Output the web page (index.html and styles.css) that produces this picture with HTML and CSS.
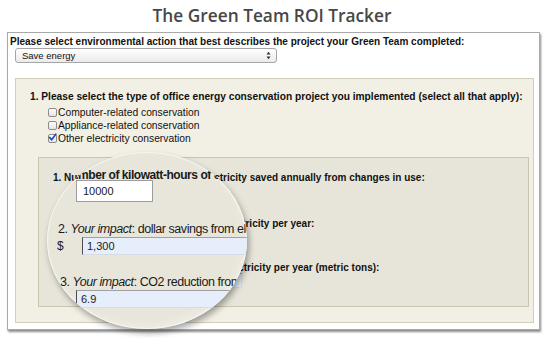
FILE: index.html
```html
<!DOCTYPE html>
<html>
<head>
<meta charset="utf-8">
<link rel="stylesheet" href="styles.css">
</head>
<body>
<h1 class="title">The Green Team ROI Tracker</h1>
<div class="frame">
  <div class="prompt">Please select environmental action that best describes the project your Green Team completed:</div>
  <div class="select"><span>Save energy</span><svg class="arrows" width="5" height="9" viewBox="0 0 5 9"><path d="M0.5 3.5 L2.5 0.8 L4.5 3.5 Z M0.5 5.5 L2.5 8.2 L4.5 5.5 Z" fill="#333"/></svg></div>
  <div class="panel">
    <div class="q">1. Please select the type of office energy conservation project you implemented (select all that apply):</div>
    <ul class="checks">
      <li><span class="cb"></span>Computer-related conservation</li>
      <li><span class="cb"></span>Appliance-related conservation</li>
      <li><span class="cb"><svg width="9" height="9" viewBox="0 0 9 9"><path d="M1.6 4.4 L3.6 6.8 L7.8 1.2" fill="none" stroke="#1f4fc4" stroke-width="1.7" stroke-linecap="round" stroke-linejoin="round"/></svg></span>Other electricity conservation</li>
    </ul>
    <div class="sub">
      <div class="q">1. Number of kilowatt-hours of electricity saved annually from changes in use:</div>
      <div class="field field-kwh">10000</div>
      <div class="q q2">2. <i>Your impact</i>: dollar savings from electricity per year:</div>
      <div class="money"><span class="cur">$</span><div class="field field-blue field-usd">1,300</div></div>
      <div class="q q3">3. <i>Your impact</i>: CO2 reduction from electricity per year (metric tons):</div>
      <div class="field field-blue field-co2">6.9</div>
    </div>
  </div>
</div>
<div class="lens">
  <div class="m-q1">1. Number of kilowatt-hours of electricity saved annually from changes in use:</div>
  <div class="m-field m-kwh">10000</div>
  <div class="m-q m-q2">2. <i>Your impact</i>: dollar savings from electricity per year:</div>
  <div class="m-money"><span class="m-cur">$</span><div class="m-field m-blue">1,300</div></div>
  <div class="m-q m-q3">3. <i>Your impact</i>: CO2 reduction from electricity per year (metric tons):</div>
  <div class="m-field m-blue m-co2">6.9</div>
</div>
</body>
</html>
```
FILE: styles.css
```css
* { box-sizing: border-box; }
html, body { margin: 0; padding: 0; background: #fff; }
body {
  position: relative;
  width: 548px;
  height: 338px;
  overflow: hidden;
  font-family: "Liberation Sans", Arial, sans-serif;
  color: #111;
}
.title {
  margin: 0;
  height: 32px;
  padding: 1px 4px 0 0;
  line-height: 30px;
  text-align: center;
  font-family: "Open Sans", sans-serif;
  font-weight: 600;
  font-size: 17.3px;
  color: #474747;
}
.frame {
  margin-left: 7px;
  width: 533px;
  height: 298px;
  border: 1px solid #a9a9a9;
  background: #fff;
  box-shadow: 1px 2px 2px rgba(0, 0, 0, 0.45);
}
.prompt {
  margin-top: 2px;
  padding-left: 2px;
  line-height: 13px;
  font-size: 10px;
  font-weight: bold;
  white-space: nowrap;
}
.select {
  margin: 0 0 0 7px;
  width: 262px;
  height: 15px;
  border: 1px solid #a6a6a6;
  border-radius: 3px;
  background: linear-gradient(#ffffff, #ebebeb);
  display: flex;
  align-items: center;
  justify-content: space-between;
  padding: 0 5px 0 6px;
  font-size: 9.5px;
  line-height: 12px;
}
.arrows { display: block; }
.panel {
  margin: 15px 0 0 7px;
  width: 519px;
  height: 245px;
  border: 1px solid #d2cebb;
  background: #f2f0e4;
  padding: 11px 0 0 14px;
}
.q {
  line-height: 13px;
  font-size: 10px;
  font-weight: bold;
  white-space: nowrap;
}
.panel > .q { font-size: 10.2px; }
.checks {
  list-style: none;
  margin: 3px 0 0 18px;
  padding: 0;
}
.checks li {
  display: flex;
  align-items: center;
  height: 13px;
  line-height: 13px;
  font-size: 10.3px;
}
.cb {
  width: 9px;
  height: 9px;
  margin-right: 1px;
  border: 1px solid #8c8c8c;
  border-radius: 2px;
  background: linear-gradient(#ffffff, #e4e4e4);
  position: relative;
  flex: none;
}
.cb svg {
  position: absolute;
  left: -1px;
  top: -2px;
}
.sub {
  margin: 12px 0 0 8px;
  width: 491px;
  height: 150px;
  border: 1px solid #c9c5b0;
  background: #e7e5d9;
  padding: 13px 0 0 14px;
}
.field {
  font-size: 9.5px;
  line-height: 13px;
  padding-left: 3px;
  display: flex;
  align-items: center;
}
.field-kwh {
  margin: 1px 0 0 17px;
  width: 59px;
  height: 17px;
  background: #fff;
  border: 1px solid #a5a5a5;
}
.field-blue {
  background: #e6eefb;
  border-top: 1px solid #9a9a9a;
  border-left: 1px solid #5a5a5a;
  border-right: 1px solid #d8dde6;
  border-bottom: 1px solid #d8dde6;
}
.q2 { margin-top: 15px; }
.money {
  margin-top: 1px;
  display: flex;
  align-items: center;
  height: 15px;
}
.cur {
  flex: none;
  width: 19px;
  font-size: 10px;
  font-weight: bold;
}
.field-usd { flex: none; width: 170px; height: 15px; }
.q3 { margin-top: 15px; }
.field-co2 {
  margin: -1px 0 0 14px;
  width: 175px;
  height: 15px;
}

/* magnifier lens overlay */
.lens {
  position: absolute;
  left: 47px;
  top: 152px;
  width: 200px;
  height: 177px;
  border-radius: 50%;
  overflow: hidden;
  background: #e8e6da;
  box-shadow: 2px 4px 6px rgba(0, 0, 0, 0.35), inset 0 0 0 1px rgba(255, 255, 255, 0.6), inset -3px -4px 8px rgba(255, 255, 255, 0.3);
  color: #1a1a1a;
}
.m-q1 {
  padding-top: 17px;
  margin-left: 4px;
  line-height: 12px;
  font-size: 12px;
  font-weight: bold;
  letter-spacing: -0.45px;
  white-space: nowrap;
}
.m-field {
  font-size: 11px;
  display: flex;
  align-items: center;
  padding-left: 6px;
}
.m-kwh {
  margin: -1px 0 0 29px;
  width: 77px;
  height: 22px;
  background: #fff;
  border: 1px solid #9d9d9d;
}
.m-q {
  line-height: 14px;
  font-size: 12.5px;
  letter-spacing: -0.45px;
  white-space: nowrap;
}
.m-q2 { margin: 20px 0 0 11px; }
.m-money {
  margin: 1px 0 0 10px;
  display: flex;
  align-items: center;
  height: 18px;
}
.m-cur {
  flex: none;
  width: 25px;
  font-size: 12px;
}
.m-blue {
  width: 300px;
  height: 18px;
  flex: none;
  padding-left: 4px;
  background: #e6eefb;
  border-top: 1px solid #a0a0a0;
  border-left: 1px solid #4d4d4d;
  border-bottom: 1px solid #d6dbe4;
}
.m-q3 { margin: 20px 0 0 13px; }
.m-co2 { margin: 1px 0 0 29px; }
```
